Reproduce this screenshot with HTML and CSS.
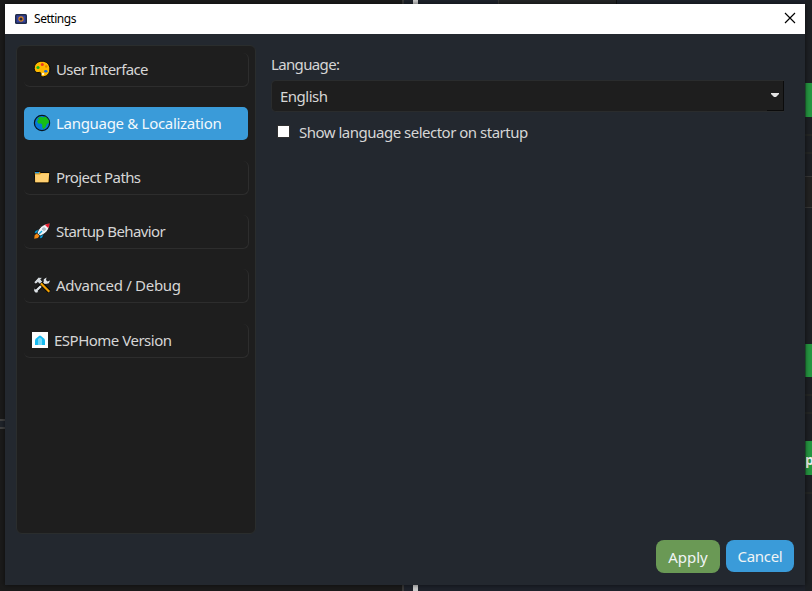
FILE: index.html
```html
<!DOCTYPE html>
<html lang="en">
<head>
<meta charset="utf-8">
<title>Settings</title>
<link rel="stylesheet" href="styles.css">
</head>
<body>
<div class="backdrop" aria-hidden="true">
  <i class="strip strip-top"></i><i class="strip strip-bottom"></i>
  <i class="field"></i><i class="divider top"></i><i class="divider bottom"></i>
  <i class="handle top"></i><i class="handle bottom"></i>
  <i class="splitter"></i>
  <div class="edge">
    <i class="green first"></i><i class="rule r1"></i><i class="rule r2"></i><i class="box"></i>
    <i class="green second"></i><i class="rule r3"></i><i class="rule r4"></i>
    <span class="green third">p</span><i class="rule r5"></i>
  </div>
</div>
<main class="window">
  <header class="titlebar">
    <svg class="app-icon" width="12" height="10" viewBox="0 0 12 10"><rect width="12" height="10" rx="1.5" fill="#202b48"/><rect x="1.5" y="1.5" width="9" height="7" fill="#3443a0"/><circle cx="6" cy="5" r="2.1" fill="#292538" stroke="#d98524" stroke-width="1.2"/></svg>
    <span class="title">Settings</span>
    <svg class="close" width="12" height="12" viewBox="0 0 12 12"><path d="M1 1l10 10M11 1L1 11" stroke="#000" stroke-width="1.15"/></svg>
  </header>
  <div class="content">
    <nav class="sidebar">
      <a class="item snug"><svg viewBox="0 0 18 18"><path d="M9 1.200C4.500 1.200 1.200 4.200 1.200 8.300c0 2.700 1.700 4.400 3.700 4.300 1.600-.1 2.300-.6 2.900.5.700 1.200-.7 2.600.9 3.500 1.500.8 8.200-.4 8.200-7.600C16.900 4.400 13.400 1.200 9 1.200z" fill="#ffb900" stroke="#080808" stroke-width="1"/><circle cx="5" cy="7.500" r="1.600" fill="#18b51b"/><circle cx="9.300" cy="4.600" r="1.500" fill="#ed3b20"/><circle cx="13.200" cy="6.500" r="1.200" fill="#e68a00"/><ellipse cx="12.800" cy="11.300" rx="1.700" ry="1.300" fill="#1769e0"/><circle cx="10" cy="14" r="1.300" fill="#fff4cf"/></svg><span>User Interface</span></a>
      <a class="item active"><svg viewBox="0 0 18 18"><circle cx="9" cy="9" r="7.600" fill="#0878d8" stroke="#071420" stroke-width="1.200"/><path d="M4.700 4.600L7.300 2.800l2.800.6 2.400-.9 3.100 3.300.5 3-2.300 1.200-1.300 3.300-2.200 1.900-1.100-2 .1-2.500-1.200-1.100-3-.2-1-2.500 1.900-1.400z" fill="#16bd17"/></svg><span>Language &amp; Localization</span></a>
      <a class="item snug"><svg viewBox="0 0 18 18"><path d="M1.200 4.500l.7-1h4.700l1.200 1h8.700l-.4 10.300H2z" fill="#df9b18" stroke="#080808"/><path d="M2 4h4.200v1.400H2z" fill="#2598de"/><path d="M2 6.400l5 .1 1.600-1.300h7.700l-1.200 9H2.200z" fill="#ffd071"/></svg><span>Project Paths</span></a>
      <a class="item snug"><svg viewBox="0 0 18 18"><path d="M6 7L2.300 8.700 1 11.500l3.500-.5M11 12l-1.600 3.800-2.800 1.100.5-3.600" fill="#08a5e5" stroke="#080808" stroke-width=".6"/><path d="M4 11.200l-2.300 2.100-.5 3.500 3.600-.9 1.900-2.300z" fill="#f28813"/><path d="M4 11.200C6 5.500 10 2 16.700 1.300c0 6.200-3.900 10.600-9.700 12.700z" fill="#eef2f6" stroke="#080808" stroke-width=".7"/><path d="M11.800 2.700l4.900-1.400-1.300 5z" fill="#e51c2d"/><circle cx="11" cy="7" r="1.600" fill="#718091"/><circle cx="11" cy="7" r=".9" fill="#c9d5df"/><path d="M6 12l3-3" stroke="#0ba7dc" stroke-width="1.400"/></svg><span>Startup Behavior</span></a>
      <a class="item"><svg viewBox="0 0 18 18"><path d="M2.600 15.200L12.500 5.500" stroke="#050505" stroke-width="4"/><path d="M3 14.900L13 5.200" stroke="#dce1e5" stroke-width="2.200"/><path d="M13.500 1.500l-2.700 1.700-.2 3 2 1.700 3.200-.6 1.300-2.800-2.700 1-1.400-1.500zM1.500 12.500l-.4 2.500 1.800 1.800 2.500-.7-2-1.800z" fill="#dce1e5"/><path d="M7.200 6.500l9 9" stroke="#050505" stroke-width="4"/><path d="M7.800 7.300l8.500 8.500" stroke="#f2a000" stroke-width="2.200"/><path d="M1 6.200l1.800 1.900 2-1.800 2 1.700 2.600-2.600-1.800-1.800 1.800-1.800L5.500 1.300z" fill="#d3d8dc" stroke="#080808" stroke-width=".6"/></svg><span>Advanced / Debug</span></a>
      <a class="item esp"><svg viewBox="0 0 16 16"><path fill="#fff" d="M0 0h16v16H0z"/><path d="M3 8.500Q3 7.500 4 6.600L7 4q1-.8 2 0l3 2.600q1 .9 1 1.900V13H3z" fill="#18bcf2"/><path d="M6 7l2-1.500L10 7v6H6z" fill="#72d7f7"/></svg><span>ESPHome Version</span></a>
    </nav>
    <section class="pane">
      <div class="label">Language:</div>
      <div class="select" role="combobox"><span>English</span><div class="arrow"><svg width="10" height="5" viewBox="0 0 10 5"><path d="M1 0h8v1L6 4H4L1 1z" fill="#e4e4e4"/></svg></div></div>
      <div class="check"><i></i><span>Show language selector on startup</span></div>
    </section>
  </div>
  <footer class="actions"><button class="apply">Apply</button><button class="cancel">Cancel</button></footer>
</main>
</body>
</html>
```
FILE: styles.css
```css
* { box-sizing: border-box; }
body { margin: 0; width: 812px; height: 591px; overflow: hidden; background: #1b1b1b; color: #d6d6d6; font: 15px/20px "Noto Sans", "Open Sans", sans-serif; position: relative; }
.backdrop i, .edge, .green { position: absolute; }
.backdrop .strip { left: 404px; right: 0; height: 6px; background: #1e222b; }
.strip-top { top: 0; }
.strip-bottom { bottom: 0; }
.backdrop .field { left: 498px; top: 0; width: 119px; height: 4px; background: #242526; border-left: 1px solid #363636; border-right: 1px solid #111; }
.divider { left: 402px; width: 2px; height: 6px; background: #383838; }
.handle { left: 413px; width: 5px; height: 7px; background: #ccc; }
.top { top: 0; }
.bottom { bottom: 0; }
.backdrop .handle.top { height: 4px; }
.splitter { left: 0; top: 419px; width: 5px; height: 10px; background: #20242b; border: solid #424242; border-width: 2px 0; }
.edge { left: 805px; top: 0; width: 7px; height: 591px; background: #1d2024; overflow: hidden; }
.green { left: 0; width: 7px; background: #259641; border-left: 1px solid #1f6e34; }
.first { top: 83px; height: 34px; }
.second { top: 344px; height: 33px; }
.third { top: 441px; height: 34px; font: 700 14px/38px "Noto Sans", sans-serif; color: #eee; overflow: hidden; text-indent: -1px; }
.rule { left: 0; width: 7px; height: 2px; background: #242625; }
.r1 { top: 134px; }
.r2 { top: 152px; }
.r3 { top: 394px; }
.r4 { top: 412px; }
.r5 { top: 492px; }
.box { left: 0; top: 176px; width: 7px; height: 32px; background: #222; border: solid #363636; border-width: 1px 0; }
.window { position: relative; width: 800px; height: 581px; margin: 4px 0 0 5px; background: #23282f; display: flex; flex-direction: column; box-shadow: 0 0 5px #0009; }
.titlebar { height: 30px; flex: none; background: #fff; color: #000; display: flex; align-items: center; padding: 0 9px 0 10px; }
.app-icon { margin-top: -1px; }
.title { margin-left: 7px; font-size: 12px; letter-spacing: -.45px; }
.close { margin: -2px 0 0 auto; }
.content { display: flex; gap: 15px; padding: 11px 21px 0 11px; }
.sidebar { width: 240px; height: 489px; padding: 7px 6px 0 7px; border: 1px solid #2a2d2d; border-radius: 6px; background: #1e1e1e; display: flex; flex-direction: column; gap: 20px; }
.item { height: 34px; flex: none; display: flex; align-items: center; gap: 5px; padding: 0 0 1px 9px; border: solid #2d2d2d; border-width: 0 1px 1px 0; border-radius: 6px; letter-spacing: -.3px; white-space: nowrap; }
.item svg { width: 18px; height: 18px; flex: none; }
.item span { margin-top: -1px; }
.item.snug { letter-spacing: -.6px; }
.item.active { height: 33px; margin: 0 1px 1px 0; border: 0; border-radius: 5px; background: #3a9bd9; color: #f2f8fc; }
.item.esp { margin-top: 1px; padding-left: 8px; gap: 6px; letter-spacing: -.5px; }
.item.esp svg { width: 16px; height: 16px; }
.pane { width: 513px; padding-top: 9px; letter-spacing: -.5px; }
.label { letter-spacing: -.65px; }
.select { margin-top: 6px; height: 32px; display: flex; align-items: center; background: #1e1e1e; border: 1px solid #2a2c2d; border-right: 0; border-radius: 5px 0 0 5px; padding-left: 8px; }
.arrow { margin-left: auto; width: 17px; height: 30px; display: flex; align-items: center; justify-content: center; border: solid #0b0b0b; border-width: 0 1px 1px 0; }
.check { display: flex; align-items: center; gap: 9px; margin: 10px 0 0 6px; }
.check i { width: 13px; height: 13px; background: #fff; border: 1px solid #303030; margin-top: -1px; }
.actions { display: flex; justify-content: flex-end; gap: 6px; padding: 6px 11px 0 0; }
.actions button { height: 33px; padding: 0; border: 0; border-radius: 8px; color: #f0f4f5; font: inherit; letter-spacing: -.3px; }
.actions .apply { width: 64px; padding-top: 1px; background: #6a9955; letter-spacing: 0; }
.actions .cancel { width: 68px; height: 32px; background: #3a9bd9; }
```
